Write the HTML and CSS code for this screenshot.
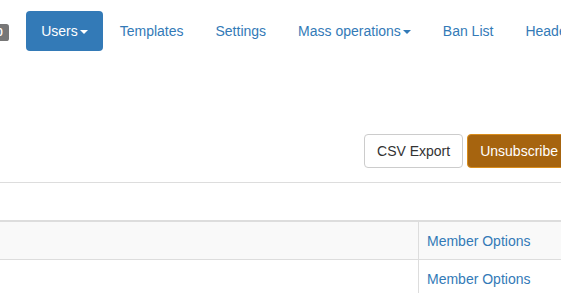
FILE: index.html
```html
<!DOCTYPE html>
<html lang="en">
<head>
    <meta charset="UTF-8">
    <meta name="viewport" content="width=device-width, initial-scale=1.0">
    <title>Users</title>
    <link rel="stylesheet" href="styles.css">
</head>
<body>
    <ul class="nav-pills">
        <li><a href="#">Lists <span class="label">0</span></a></li>
        <li class="active"><a href="#">Users<span class="caret"></span></a></li>
        <li><a href="#">Templates</a></li>
        <li><a href="#">Settings</a></li>
        <li><a href="#">Mass operations<span class="caret"></span></a></li>
        <li><a href="#">Ban List</a></li>
        <li><a href="#">Headers</a></li>
    </ul>

    <div class="toolbar">
        <button class="btn">CSV Export</button>
        <button class="btn btn-warning">Unsubscribe</button>
    </div>

    <hr>

    <table class="members">
        <colgroup>
            <col class="col-main">
            <col class="col-options">
        </colgroup>
        <thead>
            <tr><th></th><th></th></tr>
        </thead>
        <tbody>
            <tr><td></td><td class="opt"><a href="#">Member Options</a></td></tr>
            <tr><td></td><td class="opt"><a href="#">Member Options</a></td></tr>
        </tbody>
    </table>
</body>
</html>
```

FILE: styles.css
```css
html, body {
    margin: 0;
    overflow: hidden;
    background: #fff;
    font-family: "Liberation Sans", Arial, sans-serif;
    font-size: 14px;
    line-height: 20px;
    color: #333;
}

a {
    color: #337ab7;
    text-decoration: none;
}

/* top navigation */
.nav-pills {
    display: flex;
    white-space: nowrap;
    list-style: none;
    margin: 11px 0 0 -57px;
    padding: 0;
}

.nav-pills li + li {
    margin-left: 2px;
}

.nav-pills a {
    display: block;
    padding: 10px 15px;
    border-radius: 4px;
}

.nav-pills .active a {
    background: #337ab7;
    color: #fff;
}

.caret {
    display: inline-block;
    width: 0;
    height: 0;
    margin-left: 2px;
    vertical-align: middle;
    border-top: 4px solid;
    border-left: 4px solid transparent;
    border-right: 4px solid transparent;
}

.label {
    padding: .2em .6em .3em;
    font-size: 75%;
    font-weight: bold;
    line-height: 1;
    color: #fff;
    background: #777;
    border-radius: .25em;
}

/* buttons */
.toolbar {
    display: flex;
    justify-content: flex-end;
    gap: 4px;
    margin: 83px -10px 0 0;
}

.btn {
    padding: 6px 12px;
    font-family: inherit;
    font-size: 14px;
    line-height: 20px;
    color: #333;
    background: #fff;
    border: 1px solid #ccc;
    border-radius: 4px;
}

.btn-warning {
    color: #fff;
    background: #a6640f;
    border-color: #d98d1c;
}

hr {
    margin: 14px 0 0;
    border: 0;
    border-top: 1px solid #ddd;
}

/* member table */
.members {
    table-layout: fixed;
    width: 640px;
    border-spacing: 0;
}

.col-main {
    width: 418px;
}

.members th,
.members td {
    padding: 8px;
    box-sizing: border-box;
}

.members th {
    height: 39px;
    border-bottom: 2px solid #ddd;
}

.members td {
    height: 38px;
    border-bottom: 1px solid #ddd;
}

.members tbody tr:nth-child(odd) td {
    background: #f9f9f9;
}

.members td.opt {
    border-left: 1px solid #ddd;
}
```
